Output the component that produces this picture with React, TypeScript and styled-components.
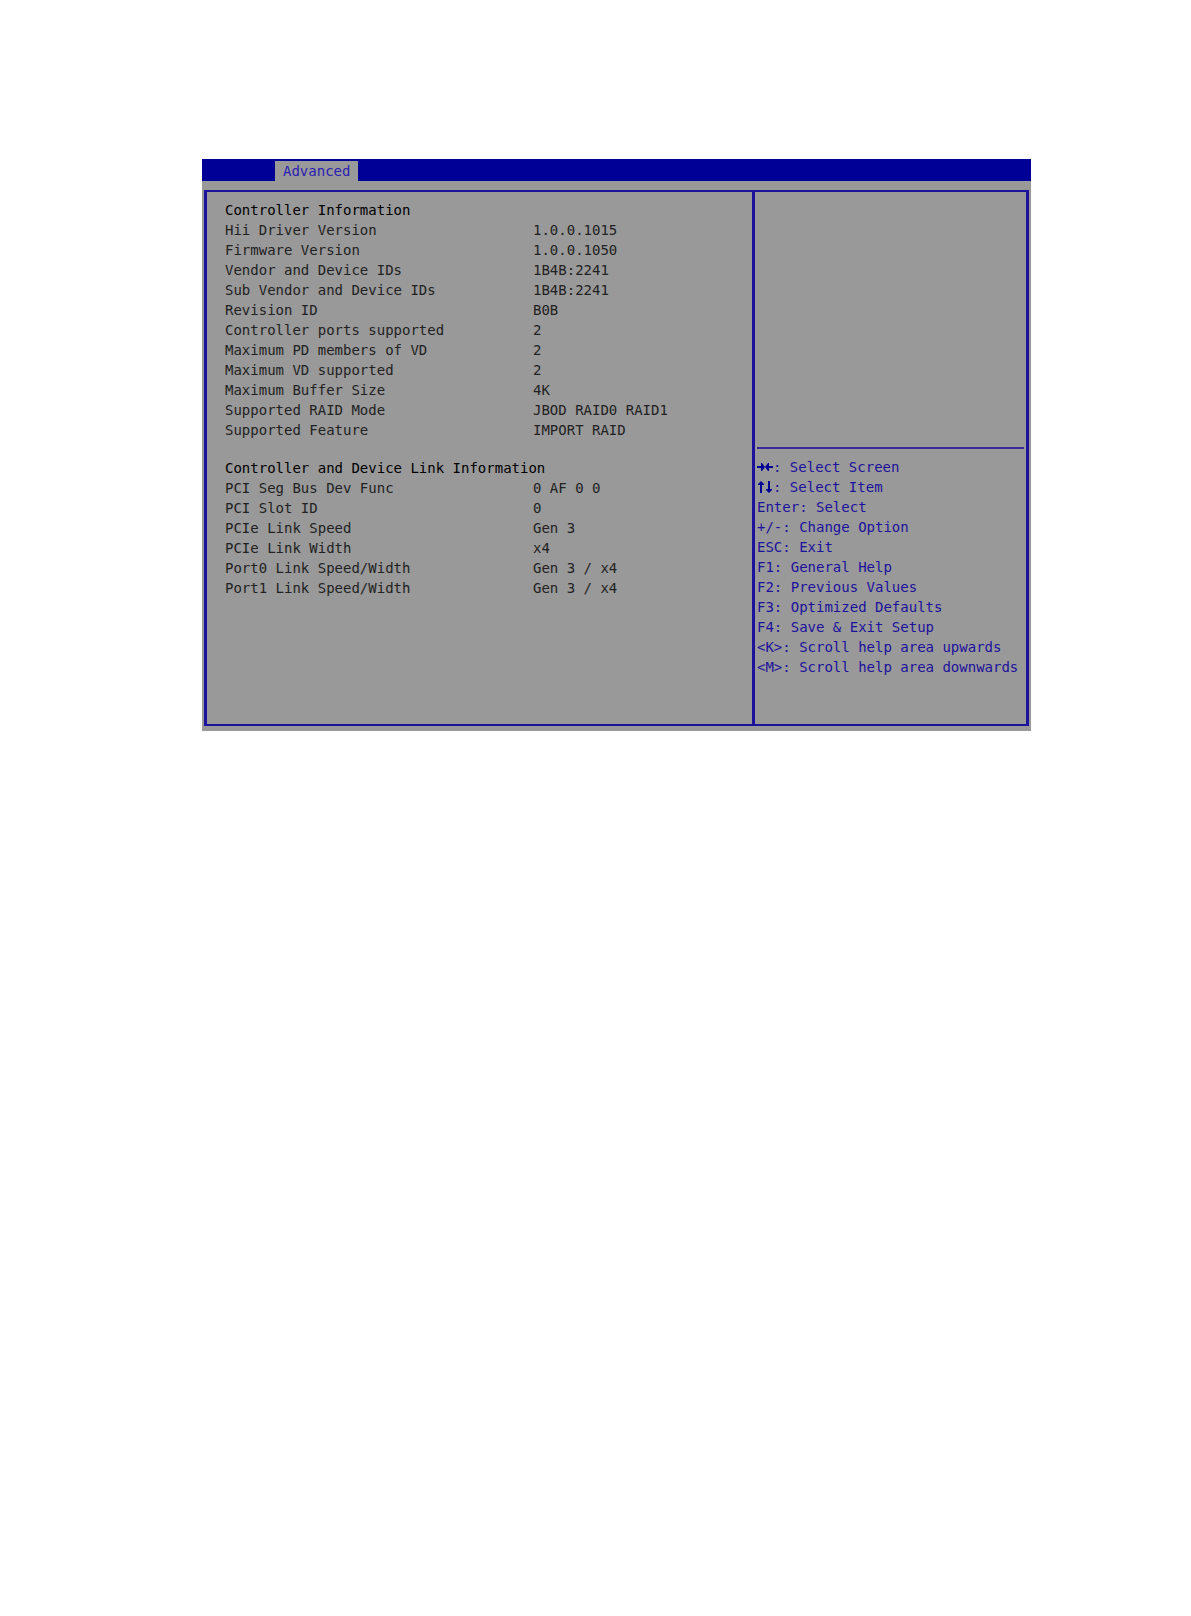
import React from 'react';
import styled, { createGlobalStyle } from 'styled-components';

interface Field {
  label: string;
  value: string;
}

interface HelpKey {
  keys: string;
  action: string;
  icon?: 'horizontal' | 'vertical';
}

const controllerFields: Field[] = [
  { label: 'Hii Driver Version', value: '1.0.0.1015' },
  { label: 'Firmware Version', value: '1.0.0.1050' },
  { label: 'Vendor and Device IDs', value: '1B4B:2241' },
  { label: 'Sub Vendor and Device IDs', value: '1B4B:2241' },
  { label: 'Revision ID', value: 'B0B' },
  { label: 'Controller ports supported', value: '2' },
  { label: 'Maximum PD members of VD', value: '2' },
  { label: 'Maximum VD supported', value: '2' },
  { label: 'Maximum Buffer Size', value: '4K' },
  { label: 'Supported RAID Mode', value: 'JBOD RAID0 RAID1' },
  { label: 'Supported Feature', value: 'IMPORT RAID' },
];

const linkFields: Field[] = [
  { label: 'PCI Seg Bus Dev Func', value: '0 AF 0 0' },
  { label: 'PCI Slot ID', value: '0' },
  { label: 'PCIe Link Speed', value: 'Gen 3' },
  { label: 'PCIe Link Width', value: 'x4' },
  { label: 'Port0 Link Speed/Width', value: 'Gen 3 / x4' },
  { label: 'Port1 Link Speed/Width', value: 'Gen 3 / x4' },
];

const helpKeys: HelpKey[] = [
  { keys: '', action: 'Select Screen', icon: 'horizontal' },
  { keys: '', action: 'Select Item', icon: 'vertical' },
  { keys: 'Enter', action: 'Select' },
  { keys: '+/-', action: 'Change Option' },
  { keys: 'ESC', action: 'Exit' },
  { keys: 'F1', action: 'General Help' },
  { keys: 'F2', action: 'Previous Values' },
  { keys: 'F3', action: 'Optimized Defaults' },
  { keys: 'F4', action: 'Save & Exit Setup' },
  { keys: '<K>', action: 'Scroll help area upwards' },
  { keys: '<M>', action: 'Scroll help area downwards' },
];

const arrowPaths = {
  horizontal: 'M0 6h4V3h1l3 4-3 4H4V8H0zM16 6h-4V3h-1L8 7l3 4h1V8h4z',
  vertical: 'M3 13V5H1V4l3-3 3 3v1H5v8zM11 1v8H9v1l3 3 3-3V9h-2V1z',
};

const FieldTable = ({ title, fields }: { title: string; fields: Field[] }) => (
  <Table>
    <Title>{title}</Title>
    <tbody>
      {fields.map(field => (
        <tr key={field.label}>
          <Label scope="row">{field.label}</Label>
          <Value>{field.value}</Value>
        </tr>
      ))}
    </tbody>
  </Table>
);

const App = () => (
  <>
    <GlobalStyle />
    <Page>
      <Screen>
        <MenuBar>
          <Tab href="#advanced">Advanced</Tab>
        </MenuBar>
        <Panels>
          <Main id="advanced">
            <FieldTable title="Controller Information" fields={controllerFields} />
            <FieldTable title="Controller and Device Link Information" fields={linkFields} />
          </Main>
          <Side>
            <ItemHelp />
            <KeyList>
              {helpKeys.map(({ keys, action, icon }) => (
                <li key={action}>
                  {icon && (
                    <Arrows viewBox="0 0 16 14" aria-hidden="true">
                      <path d={arrowPaths[icon]} />
                    </Arrows>
                  )}
                  {keys}: {action}
                </li>
              ))}
            </KeyList>
          </Side>
        </Panels>
      </Screen>
    </Page>
  </>
);

export default App;

const GlobalStyle = createGlobalStyle`
  * {
    box-sizing: border-box;
  }

  body {
    margin: 0;
    background: #fff;
  }
`;

const Page = styled.div`
  padding: 159px 160px 0 202px;
`;

const Screen = styled.div`
  background: #999;
  color: #222;
  font: 14px/20px 'DejaVu Sans Mono', monospace;
  padding-bottom: 5px;
`;

const MenuBar = styled.nav`
  display: flex;
  align-items: flex-end;
  height: 22px;
  padding-left: 73px;
  background: #000096;
`;

const Tab = styled.a`
  padding: 0 8px;
  background: #999;
  color: #2a20b4;
  text-decoration: none;
`;

const Panels = styled.div`
  display: flex;
  min-height: 536px;
  margin: 9px 2px 0;
  border: 2px solid #1c129c;
  border-width: 2px 3px;
`;

const Main = styled.main`
  flex: 1;
  padding: 8px 18px;
`;

const Table = styled.table`
  width: 100%;
  border-collapse: collapse;
  table-layout: fixed;

  & + & {
    margin-top: 18px;
  }
`;

const Title = styled.caption`
  color: #000;
  text-align: left;
`;

const Label = styled.th`
  width: 308px;
  padding: 0;
  font-weight: normal;
  text-align: left;
`;

const Value = styled.td`
  padding: 0;
`;

const Side = styled.aside`
  width: 274px;
  padding: 0 2px;
  border-left: 3px solid #1c129c;
  color: #1c129c;
`;

const ItemHelp = styled.div`
  height: 257px;
  border-bottom: 2px solid #3a2a9a;
`;

const KeyList = styled.ul`
  margin: 8px 0 0;
  padding: 0;
  list-style: none;
  white-space: nowrap;
`;

const Arrows = styled.svg`
  width: 16px;
  height: 14px;
  vertical-align: -2px;
  fill: #000096;
`;
